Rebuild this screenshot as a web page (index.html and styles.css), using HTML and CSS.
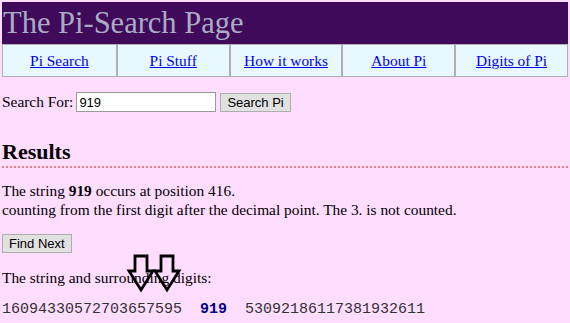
FILE: index.html
```html
<!DOCTYPE html>
<html lang="en">

<head>
    <meta charset="UTF-8">
    <title>The Pi-Search Page</title>
    <link rel="stylesheet" href="styles.css">
</head>

<body>

    <div class="masthead">The Pi-Search Page</div>

    <div class="nav">
        <a href="#" class="navcell">Pi Search</a>
        <a href="#" class="navcell">Pi Stuff</a>
        <a href="#" class="navcell">How it works</a>
        <a href="#" class="navcell">About Pi</a>
        <a href="#" class="navcell">Digits of Pi</a>
    </div>

    <form class="searchform" onsubmit="return false">
        Search For:
        <input type="text" class="searchbox" value="919">
        <button class="pibtn">Search Pi</button>
    </form>

    <h2 class="section-title">Results</h2>

    <p class="result">
        The string <b>919</b> occurs at position 416.<br>
        counting from the first digit after the decimal point. The 3. is not counted.
    </p>

    <button class="pibtn">Find Next</button>

    <div class="context">
        <p class="surround">The string and surrounding digits:</p>
        <svg class="arrows" width="60" height="40" viewBox="0 0 60 40">
            <path d="M9 2 H21 V17 H27 L15 36 L3 17 H9 Z" fill="none" stroke="#000" stroke-width="2.8" />
            <path d="M35 2 H47 V17 H53 L41 36 L29 17 H35 Z" fill="none" stroke="#000" stroke-width="2.8" />
        </svg>
    </div>

    <div class="digits">16094330572703657595  <span class="hit">919</span>  53092186117381932611</div>

</body>

</html>
```

FILE: styles.css
```css
body {
    margin: 0;
    padding: 2px;
    background-color: #ffddff;
    color: #000;
    font-family: "Liberation Serif", "Times New Roman", serif;
    font-size: 15.4px;
}

.masthead {
    background-color: #400a5a;
    color: #a8acc4;
    font-size: 30.5px;
    line-height: 42px;
    padding-left: 1px;
}

.nav {
    display: grid;
    grid-template-columns: repeat(5, 1fr);
    background-color: #e8f8ff;
    border: 1px solid #b0b0b0;
}

.navcell {
    color: #0000ee;
    text-align: center;
    line-height: 31px;
    border-left: 2px solid #b0b0b0;
}

.navcell:first-child {
    border-left: none;
}

.searchform {
    margin: 15px 0 0 0;
    display: flex;
    align-items: center;
    gap: 3px;
}

.searchbox {
    width: 134px;
    height: 16px;
    font-family: "Liberation Sans", Arial, sans-serif;
    font-size: 13px;
    border: 1px solid #999;
    padding: 1px 2px;
    margin-right: 1px;
}

.pibtn {
    font-family: "Liberation Sans", Arial, sans-serif;
    font-size: 13px;
    background-color: #e1e1e1;
    border: 1px solid #adadad;
    padding: 1px 6px;
    height: 19px;
}

.section-title {
    font-size: 22px;
    margin: 27px 0 0 0;
    padding-bottom: 1px;
    border-bottom: 2px dotted #f08080;
}

.result {
    margin: 13px 0 15px 0;
    line-height: 19px;
}

.context {
    position: relative;
}

.surround {
    margin: 16px 0 14px 0;
}

.arrows {
    position: absolute;
    left: 124px;
    top: -15px;
}

.digits {
    font-family: "Liberation Mono", "Courier New", monospace;
    font-size: 15px;
    color: #333;
    white-space: pre;
}

.hit {
    color: #00008b;
    font-weight: bold;
}
```
